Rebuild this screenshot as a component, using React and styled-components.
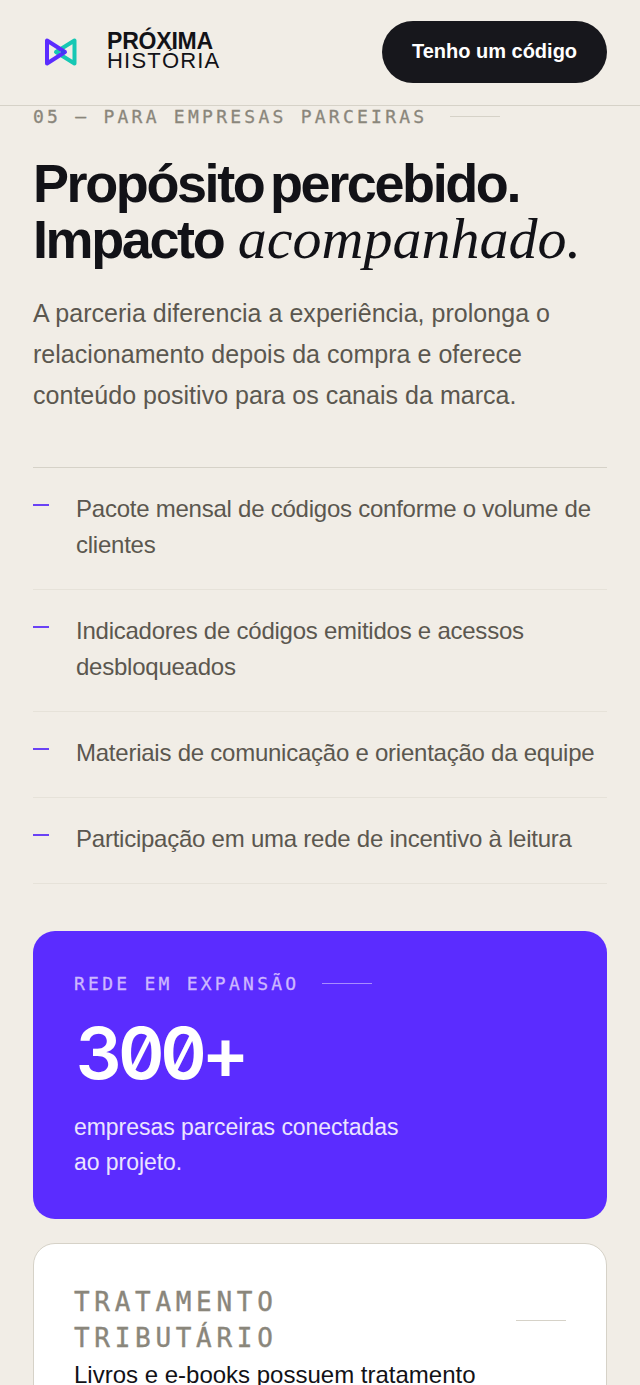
import React from 'react';
import styled, { createGlobalStyle } from 'styled-components';

const sans = '"Liberation Sans", Arial, sans-serif';
const mono = '"DejaVu Sans Mono", "Liberation Mono", monospace';

const GlobalStyle = createGlobalStyle`
  html, body { margin: 0; padding: 0; background: #f1ede6; }
  body { font-family: ${sans}; color: #121217; }
`;

const Page = styled.div`
  height: 1385px;
  overflow: hidden;
`;

const Header = styled.header`
  height: 106px;
  box-sizing: border-box;
  border-bottom: 1px solid #d6d2c8;
  padding: 0 33px 1px 44px;
  display: flex;
  align-items: center;
  justify-content: space-between;
`;

const Brand = styled.div`
  display: flex;
  align-items: center;
  gap: 29px;
`;

const BrandText = styled.div`
  display: flex;
  flex-direction: column;
  line-height: 19px;
  padding-bottom: 3px;
`;

const BrandStrong = styled.span`
  font-size: 23px;
  font-weight: 700;
  letter-spacing: -0.2px;
`;

const BrandLight = styled.span`
  font-size: 22px;
  font-weight: 400;
  letter-spacing: 1.2px;
`;

const CodeButton = styled.button`
  width: 225px;
  height: 62px;
  padding: 0 0 2px;
  border: 0;
  border-radius: 31px;
  background: #17171c;
  color: #fff;
  font-family: ${sans};
  font-size: 20px;
  font-weight: 700;
`;

const Main = styled.main`
  padding: 0 33px;
`;

const Eyebrow = styled.div`
  display: flex;
  align-items: center;
  gap: 23px;
  height: 21px;
  font-family: ${mono};
  font-size: 18px;
  letter-spacing: 3.25px;
  -webkit-text-stroke: 0.3px currentColor;
  color: ${p => p.$color || '#8a867b'};
`;

const Rule = styled.span`
  display: block;
  width: 50px;
  height: 1px;
  background: ${p => p.$color || '#d6d2c8'};
`;

const Title = styled.h1`
  margin: 28px 0 0;
  font-size: 54px;
  line-height: 56px;
  font-weight: 700;
  letter-spacing: -2.4px;
  word-spacing: -6px;
`;

const TitleAccent = styled.em`
  margin-left: 8px;
  font-family: "Liberation Serif", serif;
  font-weight: 400;
  font-style: italic;
  font-size: 58px;
  letter-spacing: 0;
`;

const Lead = styled.p`
  margin: 26px 0 0;
  font-size: 25px;
  line-height: 41px;
  letter-spacing: 0.03px;
  color: #5b574f;
`;

const List = styled.ul`
  list-style: none;
  margin: 51px 0 0;
  padding: 0;
  border-top: 1px solid #d6d2c8;
`;

const Item = styled.li`
  display: flex;
  gap: 27px;
  padding: 23px 0 26px;
  border-bottom: 1px solid #e6e2d9;
  font-size: 24px;
  line-height: 36px;
  letter-spacing: -0.24px;
  color: #5b574f;
`;

const Dash = styled.span`
  flex: none;
  width: 16px;
  height: 1.5px;
  margin-top: 13px;
  background: #6a42f5;
`;

const NetworkCard = styled.section`
  margin-top: 47px;
  height: 288px;
  box-sizing: border-box;
  padding: 42px 41px 0;
  border-radius: 22px;
  background: #5b2cff;
  color: #fff;
`;

const BigNumber = styled.div`
  margin-top: 17px;
  padding-left: 2px;
  font-family: Inter, ${mono};
  font-size: 72px;
  line-height: 83px;
  font-weight: 600;
  font-feature-settings: "zero", "tnum";
  letter-spacing: -4.5px;
`;

const NetworkText = styled.p`
  margin: 16px 0 0;
  font-size: 23px;
  line-height: 35px;
  letter-spacing: -0.05px;
  color: #ebe4ff;
`;

const TaxCard = styled.section`
  margin-top: 24px;
  height: 300px;
  box-sizing: border-box;
  padding: 40px 40px 0;
  border: 1px solid #d6d2c8;
  border-radius: 22px;
  background: #fff;
`;

const TaxHead = styled.div`
  display: flex;
  align-items: center;
  justify-content: space-between;
`;

const TaxLabel = styled.div`
  font-family: ${mono};
  font-size: 26px;
  line-height: 36px;
  letter-spacing: 4.7px;
  -webkit-text-stroke: 0.4px currentColor;
  color: #8a867b;
`;

const TaxText = styled.p`
  margin: 2px 0 0;
  font-size: 24px;
  line-height: 34px;
  color: #121217;
`;

function Logo() {
  return (
    <svg width="34" height="30" viewBox="0 0 34 30" fill="none" strokeWidth="4" strokeLinejoin="round">
      <path d="M30.5 3.5 V26.5 L12 15 Z" stroke="#16c8b4" />
      <path d="M3 3.5 V26.5 L21 15 Z" stroke="#5b2cff" />
      <circle cx="19" cy="15" r="2.2" fill="#3b3ff0" />
    </svg>
  );
}

const benefits = [
  'Pacote mensal de códigos conforme o volume de clientes',
  'Indicadores de códigos emitidos e acessos desbloqueados',
  'Materiais de comunicação e orientação da equipe',
  'Participação em uma rede de incentivo à leitura',
];

export default function App() {
  return (
    <Page>
      <GlobalStyle />
      <Header>
        <Brand>
          <Logo />
          <BrandText>
            <BrandStrong>PRÓXIMA</BrandStrong>
            <BrandLight>HISTÓRIA</BrandLight>
          </BrandText>
        </Brand>
        <CodeButton>Tenho um código</CodeButton>
      </Header>
      <Main>
        <Eyebrow>
          05 — PARA EMPRESAS PARCEIRAS
          <Rule />
        </Eyebrow>
        <Title>
          Propósito percebido.
          <br />
          Impacto <TitleAccent>acompanhado.</TitleAccent>
        </Title>
        <Lead>
          A parceria diferencia a experiência, prolonga o relacionamento depois da compra e oferece conteúdo positivo para os canais da marca.
        </Lead>
        <List>
          {benefits.map(text => (
            <Item key={text}>
              <Dash />
              <span>{text}</span>
            </Item>
          ))}
        </List>
        <NetworkCard>
          <Eyebrow $color="#cdb8ff">
            REDE EM EXPANSÃO
            <Rule $color="#a88cff" />
          </Eyebrow>
          <BigNumber>300+</BigNumber>
          <NetworkText>
            empresas parceiras conectadas
            <br />
            ao projeto.
          </NetworkText>
        </NetworkCard>
        <TaxCard>
          <TaxHead>
            <TaxLabel>
              TRATAMENTO
              <br />
              TRIBUTÁRIO
            </TaxLabel>
            <Rule />
          </TaxHead>
          <TaxText>Livros e e-books possuem tratamento</TaxText>
        </TaxCard>
      </Main>
    </Page>
  );
}
